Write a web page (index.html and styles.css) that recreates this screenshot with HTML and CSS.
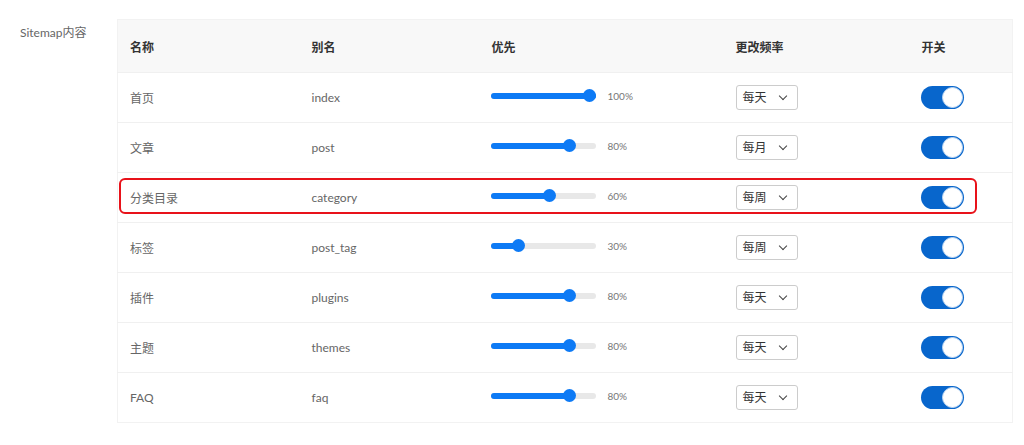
FILE: index.html
```html
<!DOCTYPE html>
<html lang="zh-CN">
<head>
    <meta charset="UTF-8">
    <meta name="viewport" content="width=device-width, initial-scale=1.0">
    <title>Sitemap</title>
    <link rel="stylesheet" href="styles.css">
</head>
<body>
    <div class="setting">
        <div class="setting-label">Sitemap内容</div>
        <div class="setting-body">
            <table class="sitemap">
                <colgroup>
                    <col class="c-name">
                    <col class="c-alias">
                    <col class="c-prio">
                    <col class="c-freq">
                    <col class="c-switch">
                </colgroup>
                <thead>
                    <tr>
                        <th>名称</th>
                        <th>别名</th>
                        <th>优先</th>
                        <th>更改频率</th>
                        <th>开关</th>
                    </tr>
                </thead>
                <tbody>
                    <tr>
                        <td>首页</td>
                        <td>index</td>
                        <td><div class="range"><div class="track"><div class="fill" style="width:100%"></div><span class="thumb" style="left:92px"></span></div><span class="pct">100%</span></div></td>
                        <td><div class="select">每天<span class="chev"></span></div></td>
                        <td><span class="switch"><span class="knob"></span></span></td>
                    </tr>
                    <tr>
                        <td>文章</td>
                        <td>post</td>
                        <td><div class="range"><div class="track"><div class="fill" style="width:75%"></div><span class="thumb" style="left:72px"></span></div><span class="pct">80%</span></div></td>
                        <td><div class="select">每月<span class="chev"></span></div></td>
                        <td><span class="switch"><span class="knob"></span></span></td>
                    </tr>
                    <tr>
                        <td>分类目录</td>
                        <td>category</td>
                        <td><div class="range"><div class="track"><div class="fill" style="width:56%"></div><span class="thumb" style="left:52px"></span></div><span class="pct">60%</span></div></td>
                        <td><div class="select">每周<span class="chev"></span></div></td>
                        <td><span class="switch"><span class="knob"></span></span></td>
                    </tr>
                    <tr>
                        <td>标签</td>
                        <td>post_tag</td>
                        <td><div class="range"><div class="track"><div class="fill" style="width:26%"></div><span class="thumb" style="left:21px"></span></div><span class="pct">30%</span></div></td>
                        <td><div class="select">每周<span class="chev"></span></div></td>
                        <td><span class="switch"><span class="knob"></span></span></td>
                    </tr>
                    <tr>
                        <td>插件</td>
                        <td>plugins</td>
                        <td><div class="range"><div class="track"><div class="fill" style="width:75%"></div><span class="thumb" style="left:72px"></span></div><span class="pct">80%</span></div></td>
                        <td><div class="select">每天<span class="chev"></span></div></td>
                        <td><span class="switch"><span class="knob"></span></span></td>
                    </tr>
                    <tr>
                        <td>主题</td>
                        <td>themes</td>
                        <td><div class="range"><div class="track"><div class="fill" style="width:75%"></div><span class="thumb" style="left:72px"></span></div><span class="pct">80%</span></div></td>
                        <td><div class="select">每天<span class="chev"></span></div></td>
                        <td><span class="switch"><span class="knob"></span></span></td>
                    </tr>
                    <tr>
                        <td>FAQ</td>
                        <td>faq</td>
                        <td><div class="range"><div class="track"><div class="fill" style="width:75%"></div><span class="thumb" style="left:72px"></span></div><span class="pct">80%</span></div></td>
                        <td><div class="select">每天<span class="chev"></span></div></td>
                        <td><span class="switch"><span class="knob"></span></span></td>
                    </tr>
                </tbody>
            </table>
            <div class="highlight"></div>
        </div>
    </div>
</body>
</html>
```
FILE: styles.css
```css
* {
    margin: 0px;
    padding: 0px;
    box-sizing: border-box;
}
body{
    font-family: Lato, "Noto Sans CJK SC", sans-serif;
    font-size: 12px;
    color: #666;
    background: #fff;
}
.setting{
    display: flex;
    padding-top: 19px;
}
.setting-label{
    width: 117px;
    padding: 6px 0 0 20px;
    font-size: 12px;
    color: #666;
    line-height: 16px;
}
.setting-body{
    position: relative;
    width: 895px;
}
.sitemap{
    width: 100%;
    table-layout: fixed;
    border-collapse: collapse;
    border: 1px solid #f2f2f2;
}
.c-name{ width: 181px; }
.c-alias{ width: 180px; }
.c-prio{ width: 244px; }
.c-freq{ width: 186px; }
.c-switch{ width: 104px; }
.sitemap th{
    height: 53px;
    background: #f8f8f8;
    text-align: left;
    padding-left: 13px;
    font-weight: 700;
    color: #333;
}
.sitemap td{
    height: 50px;
    padding-left: 13px;
    border-top: 1px solid #f0f0f0;
    vertical-align: middle;
}
.sitemap td:first-child,
.sitemap th:first-child{
    padding-left: 12px;
}
.range{
    display: flex;
    align-items: center;
    margin-top: -3px;
    margin-left: -1px;
}
.track{
    position: relative;
    width: 105px;
    height: 6px;
    border-radius: 3px;
    background: #e8e8e8;
}
.fill{
    height: 100%;
    border-radius: 3px;
    background: #0d7af5;
}
.thumb{
    position: absolute;
    top: -4px;
    width: 13px;
    height: 13px;
    border-radius: 50%;
    background: #0d7af5;
}
.pct{
    margin-left: 12px;
    font-size: 10px;
    color: #777;
}
.select{
    position: relative;
    width: 62px;
    height: 25px;
    border: 1px solid #ccc;
    border-radius: 3px;
    padding-left: 6px;
    line-height: 24px;
    color: #333;
    font-size: 12px;
}
.chev{
    position: absolute;
    right: 11px;
    top: 7px;
    width: 6px;
    height: 6px;
    border-right: 1.5px solid #444;
    border-bottom: 1.5px solid #444;
    transform: rotate(45deg);
}
.switch{
    display: block;
    position: relative;
    width: 43px;
    height: 23px;
    margin-left: -1px;
    border-radius: 12px;
    background: #0866cc;
}
.knob{
    position: absolute;
    right: 1px;
    top: 1px;
    width: 21px;
    height: 21px;
    border-radius: 50%;
    background: #fff;
    border: 1px solid #bcd6f2;
}
.highlight{
    position: absolute;
    left: 2px;
    top: 159px;
    width: 858px;
    height: 36px;
    border: 2px solid #e8121a;
    border-radius: 6px;
}
```
